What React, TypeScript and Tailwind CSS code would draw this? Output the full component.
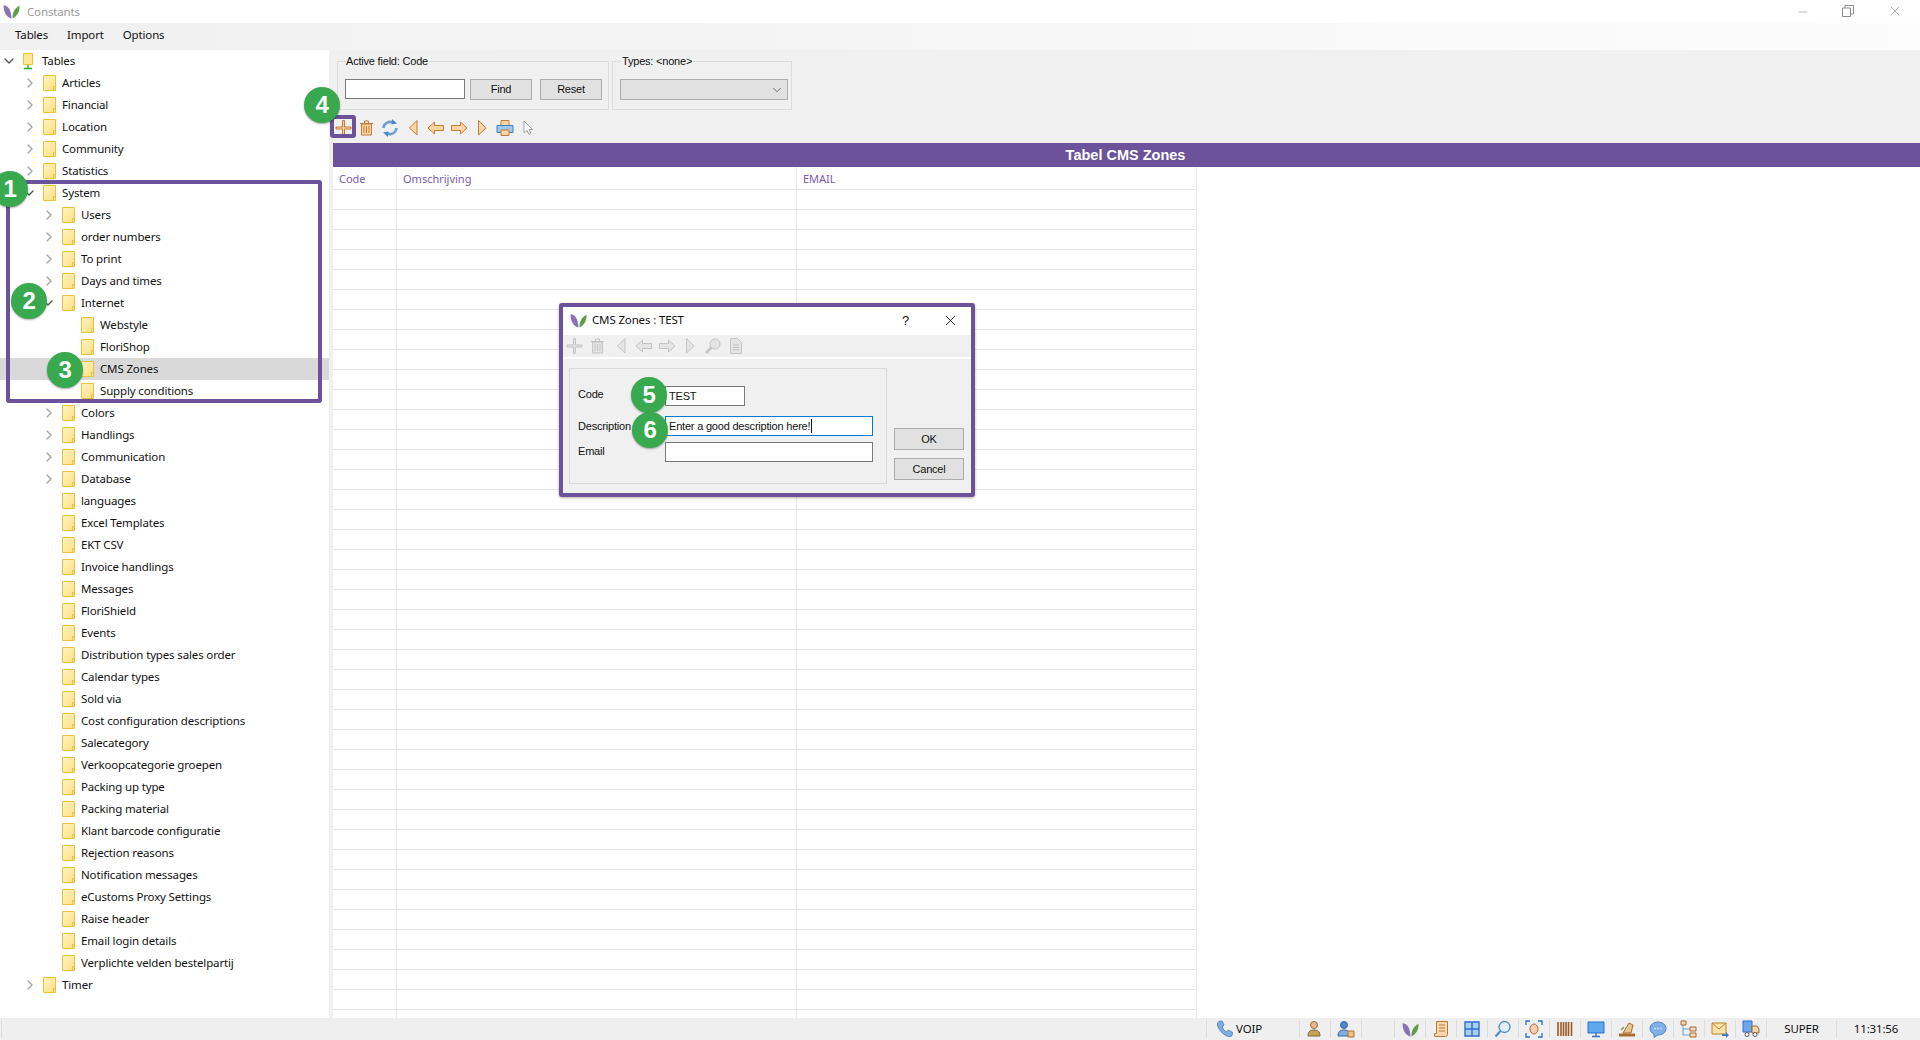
import { ChevronDown, ChevronRight, X, Minus } from "lucide-react";

const FONT = "font-['Noto_Sans',sans-serif] text-[11.5px] tracking-[-0.15px]";
const WIN_FONT = "font-['Liberation_Sans',sans-serif] text-[11px] tracking-[-0.2px]";

type TreeRow = {
  label: string;
  level: 0 | 1 | 2 | 3;
  arrow?: "open" | "closed";
  selected?: boolean;
};

const treeRows: TreeRow[] = [
  { label: "Tables", level: 0, arrow: "open" },
  { label: "Articles", level: 1, arrow: "closed" },
  { label: "Financial", level: 1, arrow: "closed" },
  { label: "Location", level: 1, arrow: "closed" },
  { label: "Community", level: 1, arrow: "closed" },
  { label: "Statistics", level: 1, arrow: "closed" },
  { label: "System", level: 1, arrow: "open" },
  { label: "Users", level: 2, arrow: "closed" },
  { label: "order numbers", level: 2, arrow: "closed" },
  { label: "To print", level: 2, arrow: "closed" },
  { label: "Days and times", level: 2, arrow: "closed" },
  { label: "Internet", level: 2, arrow: "open" },
  { label: "Webstyle", level: 3 },
  { label: "FloriShop", level: 3 },
  { label: "CMS Zones", level: 3, selected: true },
  { label: "Supply conditions", level: 3 },
  { label: "Colors", level: 2, arrow: "closed" },
  { label: "Handlings", level: 2, arrow: "closed" },
  { label: "Communication", level: 2, arrow: "closed" },
  { label: "Database", level: 2, arrow: "closed" },
  { label: "languages", level: 2 },
  { label: "Excel Templates", level: 2 },
  { label: "EKT CSV", level: 2 },
  { label: "Invoice handlings", level: 2 },
  { label: "Messages", level: 2 },
  { label: "FloriShield", level: 2 },
  { label: "Events", level: 2 },
  { label: "Distribution types sales order", level: 2 },
  { label: "Calendar types", level: 2 },
  { label: "Sold via", level: 2 },
  { label: "Cost configuration descriptions", level: 2 },
  { label: "Salecategory", level: 2 },
  { label: "Verkoopcategorie groepen", level: 2 },
  { label: "Packing up type", level: 2 },
  { label: "Packing material", level: 2 },
  { label: "Klant barcode configuratie", level: 2 },
  { label: "Rejection reasons", level: 2 },
  { label: "Notification messages", level: 2 },
  { label: "eCustoms Proxy Settings", level: 2 },
  { label: "Raise header", level: 2 },
  { label: "Email login details", level: 2 },
  { label: "Verplichte velden bestelpartij", level: 2 },
  { label: "Timer", level: 1, arrow: "closed" },
];

const levelPadding = {
  0: "pl-[3px]",
  1: "pl-[23px]",
  2: "pl-[42px]",
  3: "pl-[61px]",
};

function Leaf({ size = 16 }: { size?: number }) {
  return (
    <svg width={size} height={size} viewBox="0 0 16 16">
      <path d="M.5 2c4.500.5 7 4 7.500 12.500C3.500 13.500.5 9 .5 2z" fill="#8a72b4" />
      <path d="M15.500 2.500c.5 5.500-2.500 10-6.500 12 -.5-5 2-10 6.500-12z" fill="#5f9e4a" />
    </svg>
  );
}

function Folder() {
  return (
    <svg width="13" height="16" viewBox="0 0 13 16" className="shrink-0">
      <defs>
        <linearGradient id="fold" x1="0" y1="0" x2="1" y2="1">
          <stop offset="0" stopColor="#fff3c4" />
          <stop offset="1" stopColor="#ffe082" />
        </linearGradient>
      </defs>
      <path d="M.5.5h12v15H.5z" fill="url(#fold)" stroke="#eac23a" />
      <path d="M10.500 15.500v-4h2" fill="none" stroke="#eac23a" />
    </svg>
  );
}

function RootFolder() {
  return (
    <svg width="11" height="17" viewBox="0 0 11 17" className="shrink-0">
      <path d="M.5.5h9v11h-9z" fill="#ffe79a" stroke="#eac23a" />
      <path d="M5 12v3M1 15.500h8" stroke="#22b022" strokeWidth="1.400" fill="none" />
    </svg>
  );
}

function TreeItem({ row }: { row: TreeRow }) {
  return (
    <div
      className={`flex h-[22px] items-center ${levelPadding[row.level]} ${
        row.selected ? "bg-[#d9d9d9]" : ""
      }`}
    >
      <span className="flex w-[20px] shrink-0 items-center">
        {row.arrow === "open" && (
          <ChevronDown size={16} strokeWidth={2} className="-ml-[2px] text-[#555555]" />
        )}
        {row.arrow === "closed" && (
          <ChevronRight size={16} strokeWidth={2} className="-ml-px text-[#a6a6a6]" />
        )}
      </span>
      {row.level === 0 ? <RootFolder /> : <Folder />}
      <span className={`${row.level === 0 ? "ml-[8px]" : "ml-[6px]"} whitespace-nowrap text-[#111111]`}>
        {row.label}
      </span>
    </div>
  );
}

function Badge({ n, className }: { n: number; className: string }) {
  return (
    <div
      className={`absolute flex h-[36px] w-[36px] items-center justify-center rounded-full bg-[#38a94f] font-['Liberation_Sans',sans-serif] text-[24px] font-bold text-white shadow-[0_1px_2px_rgba(0,0,0,0.35)] ${className}`}
    >
      {n}
    </div>
  );
}

const orange = { stroke: "#c77a33", fill: "#fcd5a4" };

function ToolIcon({ name, muted = false }: { name: string; muted?: boolean }) {
  const stroke = muted ? "#c4c4c4" : orange.stroke;
  const fill = muted ? "#e4e4e4" : orange.fill;
  const p = { stroke, fill, strokeWidth: 1, strokeLinejoin: "round" as const };
  return (
    <svg width="18" height="18" viewBox="0 0 18 18" className="shrink-0">
      {name === "add" && <path d="M7.500 1.500h2v6.500h6.500v2H9.500v6.500h-2V10H1V8h6.500z" {...p} />}
      {name === "trash" && (
        <>
          <path d="M2 4.500h13M6.500 4V2h4v2" {...p} fill="none" />
          <path d="M3.500 5h10v11h-10z" {...p} />
          <path d="M6 7v7M8.500 7v7M11 7v7" {...p} fill="none" />
        </>
      )}
      {name === "first" && <path d="M13 1.500v14.500L5.500 9z" {...p} />}
      {name === "last" && <path d="M5.500 1.500v14.500L13 9z" {...p} />}
      {name === "prev" && <path d="M1 9 7.500 3v3.500h9v5h-9V15z" {...p} />}
      {name === "next" && <path d="M17 9 10.500 3v3.500h-9v5h9V15z" {...p} />}
      {name === "refresh" && (
        <>
          <path d="M2.500 9a6.500 6.500 0 0 1 10-5" fill="none" stroke="#6a9fd8" strokeWidth="2.600" />
          <path d="M15.500 9a6.500 6.500 0 0 1-10 5" fill="none" stroke="#6a9fd8" strokeWidth="2.600" />
          <path d="M11 0l5 4.500-5.500 1z M7 18l-5-4.500 5.500-1z" fill="#4f86c6" />
        </>
      )}
      {name === "print" && (
        <>
          <path d="M5 1.500h8v5H5z" fill="#fcd5a4" stroke="#c77a33" />
          <path d="M1 6.500h16v7H1z" fill="#9cc8f0" stroke="#3f7fc6" />
          <path d="M5 11h8v5.500H5z" fill="#fcd5a4" stroke="#c77a33" />
        </>
      )}
      {name === "cursor" && (
        <path d="M5 2v12l3-2.500 2 4 2-1-2-4h3.500z" fill="#fff" stroke="#a0a0a0" />
      )}
      {name === "search" && (
        <>
          <circle cx="11" cy="7" r="5" {...p} />
          <path d="M7.500 10.500 2 16" stroke={stroke} strokeWidth="2.500" />
        </>
      )}
      {name === "doc" && (
        <>
          <path d="M3.500 1.500h7l4 4v11h-11z" {...p} />
          <path d="M6 8h6M6 10.500h6M6 13h6" stroke={stroke} />
        </>
      )}
    </svg>
  );
}

function StatusIcon({ name }: { name: string }) {
  return (
    <svg width="18" height="18" viewBox="0 0 18 18">
      {name === "person1" && (
        <>
          <circle cx="8" cy="5" r="3.500" fill="#e8b98a" stroke="#9a6a3c" />
          <path d="M2 16c0-5 3-6 6-6s6 1 6 6z" fill="#c9a25a" stroke="#7a6a3c" />
        </>
      )}
      {name === "person2" && (
        <>
          <circle cx="7" cy="5" r="3.500" fill="#4f86c6" stroke="#3a6aa6" />
          <path d="M1 16c0-5 3-6 6-6s6 1 6 6z" fill="#7fb0e0" stroke="#3a6aa6" />
          <path d="M11 11h6v6h-6z" fill="#f0c080" stroke="#b07030" />
        </>
      )}
      {name === "list" && (
        <>
          <path d="M4.500 1.500h11v13a2 2 0 0 1-2 2h-11v-3h2z" fill="#f8d8b0" stroke="#c07a30" />
          <path d="M7 5h6M7 8h6M7 11h6" stroke="#c07a30" />
        </>
      )}
      {name === "grid" && (
        <path d="M2 2h14v14H2zM9 2v14M2 9h14" fill="#a8d0f5" stroke="#2f6fc8" strokeWidth="1.400" />
      )}
      {name === "search" && (
        <>
          <circle cx="10.500" cy="7" r="5.500" fill="#e2f0fc" stroke="#4f8cc8" strokeWidth="1.300" />
          <path d="M6.500 11 1.500 16.500" stroke="#4f8cc8" strokeWidth="2" />
        </>
      )}
      {name === "face" && (
        <>
          <path d="M1 5V1h4M13 1h4v4M17 13v4h-4M5 17H1v-4" fill="none" stroke="#2f6fc8" strokeWidth="1.300" />
          <ellipse cx="9" cy="9" rx="4" ry="5" fill="#f5cdb0" stroke="#a86a3c" />
        </>
      )}
      {name === "barcode" && (
        <path d="M2 2v14M5 2v14M7.500 2v14M10 2v14M12.500 2v14M15.500 2v14" stroke="#9a5a28" strokeWidth="1.600" />
      )}
      {name === "monitor" && (
        <>
          <path d="M1 2h16v11H1z" fill="#5fa8ec" stroke="#2f6fc8" />
          <path d="M9 13v3M5 16.500h8" stroke="#2f6fc8" strokeWidth="1.400" />
        </>
      )}
      {name === "chart" && (
        <>
          <path d="M1 16.500h16v-3H1z" fill="#a86a30" />
          <path d="M5 13 11 3l4 2-2 8z" fill="#e8c890" stroke="#a86a30" />
          <path d="M3 10l3-3" stroke="#6aa84f" strokeWidth="1.500" />
        </>
      )}
      {name === "chat" && (
        <>
          <path d="M9 2c4.500 0 8 2.800 8 6.500S13.500 15 9 15l-4 2.500V14c-2.500-1-4-3-4-5.500C1 4.800 4.500 2 9 2z" fill="#7fb0e8" stroke="#4f86c6" />
          <path d="M5.500 8.500h1M8.500 8.500h1M11.500 8.500h1" stroke="#fff" strokeWidth="1.500" />
        </>
      )}
      {name === "tree" && (
        <>
          <path d="M3 5v10h7M3 9h7" fill="none" stroke="#5fa0e0" />
          <path d="M1 1h5v4H1zM10 7h6v4h-6zM10 13h6v4h-6z" fill="#f8d8b0" stroke="#a86a30" />
        </>
      )}
      {name === "mail" && (
        <>
          <path d="M1 3h14v11H1z" fill="#fbe0a8" stroke="#b8862c" />
          <path d="M1 3l7 6 7-6" fill="none" stroke="#b8862c" />
          <path d="M11 14h4v-2l3 3-3 3v-2h-4z" fill="#3f7fc6" />
        </>
      )}
      {name === "truck" && (
        <>
          <path d="M1 1h9v11H1z" fill="#6fa8e8" stroke="#2f6fc8" />
          <path d="M10 6h5l2 3v4h-7z" fill="#f5d6a8" stroke="#a86a30" />
          <circle cx="5" cy="14.500" r="2" fill="#fff" stroke="#555" />
          <circle cx="13" cy="14.500" r="2" fill="#fff" stroke="#555" />
        </>
      )}
    </svg>
  );
}

const statusIcons = ["list", "grid", "search", "face", "barcode", "monitor", "chart", "chat", "tree", "mail", "truck"];

const gridRows = Array.from({ length: 42 }, (_, i) => i);

const inputBase = "h-[20px] border border-[#7a7a7a] bg-white";
const winButton = "flex items-center justify-center border border-[#adadad] bg-[#e1e1e1] text-[#111111]";

export default function App() {
  return (
    <div className={`relative flex h-[1040px] w-[1920px] flex-col overflow-hidden bg-[#f0f0f0] leading-none text-[#111111] ${FONT}`}>
      {/* Title bar */}
      <div className="flex h-[23px] shrink-0 items-center bg-white">
        <span className="ml-[3px]"><Leaf size={17} /></span>
        <span className="ml-[7px] text-[#9a9a9a]">Constants</span>
        <div className="ml-auto flex items-center text-[#8c8c8c]">
          <Minus size={14} strokeWidth={1} className="mr-[32px]" />
          <svg width="12" height="12" viewBox="0 0 12 12" className="mr-[33px] -mt-[2px]" fill="none" stroke="#8c8c8c">
            <path d="M.5 3h8v8.500h-8zM3 3V.500h8.500V9H9" />
          </svg>
          <X size={16} strokeWidth={1} className="mr-[17px] -mt-[2px]" />
        </div>
      </div>

      {/* Menu */}
      <div className="flex h-[27px] shrink-0 items-center bg-linear-to-r from-[#f0f0f0] to-[#fcfcfc] pb-[3px] pl-[15px]">
        <span className="mr-[19px]">Tables</span>
        <span className="mr-[19px]">Import</span>
        <span>Options</span>
      </div>

      <div className="flex min-h-0 flex-1">
        {/* Tree */}
        <div className="w-[329px] shrink-0 overflow-hidden bg-white">
          {treeRows.map((row) => (
            <TreeItem key={row.label} row={row} />
          ))}
        </div>

        {/* Content */}
        <div className="flex min-w-0 flex-1 flex-col pl-[4px]">
          <div className={`flex h-[60px] shrink-0 items-start gap-[3px] pl-[4px] pt-[11px] ${WIN_FONT}`}>
            <div className="relative flex h-[49px] w-[272px] items-start gap-[5px] border border-[#dcdcdc] pl-[7px] pt-[17px]">
              <span className="absolute -top-[6px] left-[7px] bg-[#f0f0f0] px-[1px]">Active field: Code</span>
              <div className={`${inputBase} w-[120px]`} />
              <div className={`${winButton} h-[21px] w-[62px]`}>Find</div>
              <div className={`${winButton} ml-[3px] h-[21px] w-[62px]`}>Reset</div>
            </div>
            <div className="relative h-[49px] w-[180px] border border-[#dcdcdc] pl-[7px] pt-[17px]">
              <span className="absolute -top-[6px] left-[8px] bg-[#f0f0f0] px-[1px]">Types: &lt;none&gt;</span>
              <div className="flex h-[21px] w-[168px] items-center justify-end border border-[#adadad] bg-[#e1e1e1] pr-[3px]">
                <ChevronDown size={14} strokeWidth={1.2} className="text-[#444444]" />
              </div>
            </div>
          </div>

          {/* Toolbar */}
          <div className="flex h-[33px] shrink-0 items-center gap-[5px] pl-[2px] pt-[2px]">
            <ToolIcon name="add" />
            <ToolIcon name="trash" />
            <ToolIcon name="refresh" />
            <ToolIcon name="first" />
            <ToolIcon name="prev" />
            <ToolIcon name="next" />
            <ToolIcon name="last" />
            <ToolIcon name="print" />
            <ToolIcon name="cursor" />
          </div>

          {/* Table */}
          <div className="flex h-[24px] shrink-0 items-center justify-center bg-[#6b529b] pr-[2px] font-['Liberation_Sans',sans-serif] text-[14.5px] font-bold tracking-normal text-white">
            Tabel CMS Zones
          </div>
          <div className="flex min-h-0 flex-1 flex-col overflow-hidden bg-white">
            <div className="flex h-[23px] shrink-0 text-[11px] tracking-normal text-[#7b5bab]">
              <div className="flex w-[64px] items-center border-r border-b border-[#e6e6e6] pl-[6px]">Code</div>
              <div className="flex w-[400px] items-center border-r border-b border-[#e6e6e6] pl-[6px]">Omschrijving</div>
              <div className="flex w-[400px] items-center border-r border-b border-[#e6e6e6] pl-[6px]">EMAIL</div>
            </div>
            {gridRows.map((i) => (
              <div key={i} className="flex h-[20px] shrink-0">
                <div className="w-[64px] border-r border-b border-[#e6e6e6]" />
                <div className="w-[400px] border-r border-b border-[#e6e6e6]" />
                <div className="w-[400px] border-r border-b border-[#e6e6e6]" />
              </div>
            ))}
          </div>
        </div>
      </div>

      {/* Status bar */}
      <div className="flex h-[22px] shrink-0 items-center bg-[#efefef]">
        <div className="ml-[1px] h-[18px] border-l border-[#dcdcdc]" />
        <div className="ml-auto flex h-[18px] items-center">
          <div className="flex h-full w-[93px] items-center border-l border-[#dcdcdc] pl-[9px]">
            <svg width="18" height="18" viewBox="0 0 18 18">
              <path d="M3 1.500 6 1l2 4-2 2c1 2 2.500 4 4.500 5l2-2 4 2.500-.5 3c-1 1-3 1.500-5 .5C6 14 2.500 9 1.500 5c-.2-1.500.5-2.800 1.500-3.500z" fill="#7fb0e0" stroke="#4f86c6" />
            </svg>
            <span className="ml-[2px]">VOIP</span>
          </div>
          <div className="flex h-full w-[31px] items-center justify-center border-l border-[#dcdcdc]"><StatusIcon name="person1" /></div>
          <div className="flex h-full w-[31px] items-center justify-center border-l border-[#dcdcdc]"><StatusIcon name="person2" /></div>
          <div className="h-full w-[33px] border-l border-[#dcdcdc]" />
          <div className="flex h-full w-[31px] items-center justify-center border-l border-[#dcdcdc]"><Leaf size={17} /></div>
          {statusIcons.map((name) => (
            <div key={name} className="flex h-full w-[31px] items-center justify-center border-l border-[#dcdcdc]">
              <StatusIcon name={name} />
            </div>
          ))}
          <div className="flex h-full w-[70px] items-center justify-center border-l border-[#dcdcdc]">SUPER</div>
          <div className="flex h-full w-[84px] items-center justify-center border-l border-[#dcdcdc] pr-[5px]">11:31:56</div>
        </div>
      </div>

      {/* Annotation frames */}
      <div className="absolute left-[6px] top-[180px] h-[223px] w-[316px] rounded-[3px] border-[4px] border-[#6b529b]" />
      <div className="absolute left-[330px] top-[115px] h-[23px] w-[26px] rounded-[3px] border-[4px] border-[#6b529b]" />

      {/* Dialog */}
      <div className={`absolute left-[559px] top-[303px] flex h-[194px] w-[416px] flex-col rounded-[3px] border-[4px] border-[#6b529b] bg-[#f0f0f0] shadow-[0_1px_3px_rgba(0,0,0,0.3)] ${WIN_FONT}`}>
        <div className="flex h-[28px] shrink-0 items-center bg-white pb-[2px] pl-[7px]">
          <Leaf size={17} />
          <span className={`ml-[5px] ${FONT}`}>CMS Zones : TEST</span>
          <span className="ml-auto mr-[33px] text-[13px]">?</span>
          <X size={17} strokeWidth={1.2} className="mr-[12px]" />
        </div>
        <div className="flex h-[24px] shrink-0 items-center gap-[5px] border-b-2 border-white pl-[3px]">
          <ToolIcon name="add" muted />
          <ToolIcon name="trash" muted />
          <ToolIcon name="first" muted />
          <ToolIcon name="prev" muted />
          <ToolIcon name="next" muted />
          <ToolIcon name="last" muted />
          <ToolIcon name="search" muted />
          <ToolIcon name="doc" muted />
        </div>
        <div className="flex min-h-0 flex-1 pl-[6px] pt-[9px]">
          <div className="flex h-[116px] w-[318px] flex-col border border-[#d9d9d9] pl-[8px]">
            <div className="mt-[17px] flex h-[20px] items-center">
              <span className="mb-[4px] w-[87px]">Code</span>
              <div className={`${inputBase} flex w-[80px] items-center pl-[3px]`}>TEST</div>
            </div>
            <div className="mt-[10px] flex h-[20px] items-center">
              <span className="w-[87px]">Description</span>
              <div className="flex h-[20px] w-[208px] items-center border border-[#0078d7] bg-white pl-[3px]">
                Enter a good description here!
                <span className="ml-[1px] h-[14px] border-l border-[#111111]" />
              </div>
            </div>
            <div className="mt-[6px] flex h-[20px] items-center">
              <span className="mb-[1px] w-[87px]">Email</span>
              <div className={`${inputBase} w-[208px]`} />
            </div>
          </div>
          <div className="ml-[7px] flex flex-col gap-[8px] pt-[60px]">
            <div className={`${winButton} h-[22px] w-[70px]`}>OK</div>
            <div className={`${winButton} h-[22px] w-[70px]`}>Cancel</div>
          </div>
        </div>
      </div>

      {/* Numbered callouts */}
      <Badge n={1} className="-left-[8px] top-[171px]" />
      <Badge n={2} className="left-[11px] top-[283px]" />
      <Badge n={3} className="left-[47px] top-[352px]" />
      <Badge n={4} className="left-[304px] top-[87px]" />
      <Badge n={5} className="left-[631px] top-[377px]" />
      <Badge n={6} className="left-[632px] top-[412px]" />
    </div>
  );
}
